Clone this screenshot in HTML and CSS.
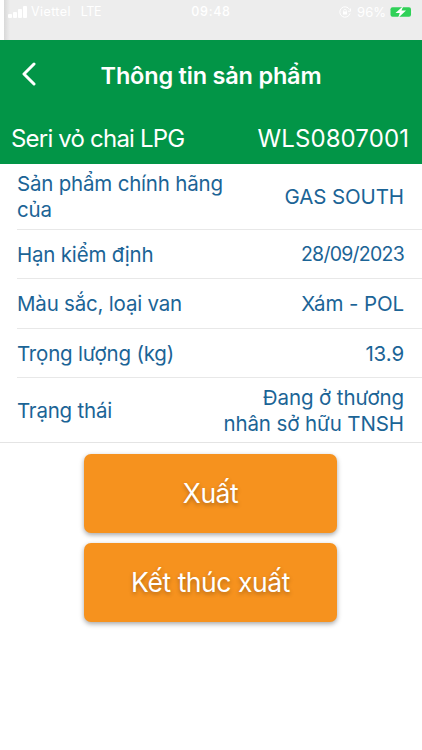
FILE: index.html
```html
<!DOCTYPE html>
<html lang="vi">
<head>
  <meta charset="UTF-8" />
  <meta name="viewport" content="width=device-width, initial-scale=1.0"/>
  <title>Thông tin sản phẩm</title>
  <link rel="stylesheet" href="styles.css">
</head>
<body>
  <div class="status-bar">
    <div class="status-left">
      <svg class="signal" width="19" height="12" viewBox="0 0 19 12" fill="#fff">
        <rect x="0" y="8" width="4" height="4" rx="1"/>
        <rect x="5" y="6" width="4" height="6" rx="1"/>
        <rect x="10" y="3" width="4" height="9" rx="1"/>
        <rect x="15" y="0" width="4" height="12" rx="1"/>
      </svg>
      <span class="carrier">Viettel</span>
      <span class="network">LTE</span>
    </div>
    <span class="clock">09:48</span>
    <div class="status-right">
      <svg class="lock" width="12" height="12" viewBox="0 0 12 12" fill="none" stroke="#fff">
        <path d="M10.6 3.6A5.2 5.2 0 1 0 11 7.4M11.6 2.5v2.7H9"/>
        <rect x="4" y="5.5" width="4" height="3" fill="#fff" stroke="none"/>
        <path d="M4.7 5.8V4.6a1.3 1.3 0 0 1 2.6 0v1.2" stroke-width=".8"/>
      </svg>
      <span class="percent">96%</span>
      <svg class="battery" width="24" height="12" viewBox="0 0 24 12">
        <rect x="0.5" y="1.3" width="20.5" height="9.4" rx="2" fill="#30d158"/>
        <path d="M13.3 0L5.5 7h4.3L8 12l8-7.4h-4.5z" fill="#fff"/>
        <path d="M22.5 4.2q1.4 1.8 0 3.6z" fill="#fff"/>
      </svg>
    </div>
  </div>

  <header class="header">
    <div class="title-bar">
      <svg class="back" width="14" height="24" viewBox="0 0 14 24" fill="none" stroke="#fff" stroke-width="3" stroke-linecap="round" stroke-linejoin="round">
        <path d="M12 2L2 12l10 10"/>
      </svg>
      <h1>Thông tin sản phẩm</h1>
    </div>
    <div class="serial">
      <span class="serial-label">Seri vỏ chai LPG</span>
      <span class="serial-value">WLS0807001</span>
    </div>
  </header>

  <div class="list">
    <div class="row tall">
      <span class="label">Sản phẩm chính hãng<br>của</span>
      <span class="value">GAS SOUTH</span>
    </div>
    <div class="row">
      <span class="label">Hạn kiểm định</span>
      <span class="value date">28/09/2023</span>
    </div>
    <div class="row">
      <span class="label">Màu sắc, loại van</span>
      <span class="value">Xám - POL</span>
    </div>
    <div class="row">
      <span class="label">Trọng lượng (kg)</span>
      <span class="value">13.9</span>
    </div>
    <div class="row tall last">
      <span class="label">Trạng thái</span>
      <span class="value">Đang ở thương<br>nhân sở hữu TNSH</span>
    </div>
  </div>

  <div class="actions">
    <button class="btn">Xuất</button>
    <button class="btn">Kết thúc xuất</button>
  </div>
</body>
</html>
```
FILE: styles.css
```css
* {
  box-sizing: border-box;
}
body {
  margin: 0;
  min-height: 100vh;
  font-family: Inter, sans-serif;
  background: #fff;
}
.status-bar {
  display: grid;
  grid-template-columns: 1fr auto 1fr;
  height: 40px;
  margin-left: 4px;
  padding: 6px 8px 0 4px;
  align-items: start;
  background: linear-gradient(to right, #d9d9d9, #ededed 6px);
  color: #fff;
  font-size: 12.5px;
  line-height: 12px;
}
.status-left, .status-right {
  display: flex;
  align-items: center;
}
.status-right {
  justify-content: flex-end;
}
.carrier {
  margin-left: 4px;
  letter-spacing: 0.4px;
}
.network {
  margin-left: 10px;
  letter-spacing: -0.4px;
}
.clock {
  font-weight: 500;
  letter-spacing: 0.7px;
}
.percent {
  margin: 0 4px 0 6px;
  font-size: 13px;
}
.header {
  height: 124px;
  background: #029547;
  color: #fff;
}
.title-bar {
  display: grid;
  grid-template-columns: 60px 1fr 60px;
  align-items: center;
  height: 72px;
}
.back {
  margin: -4px 0 0 22px;
}
h1 {
  margin: 0;
  font-size: 23.5px;
  font-weight: 600;
  line-height: 30px;
  text-align: center;
  white-space: nowrap;
  letter-spacing: -0.2px;
}
.serial {
  display: flex;
  justify-content: space-between;
  padding: 12px 13px 0 11px;
  font-size: 24px;
  line-height: 30px;
}
.serial-label {
  letter-spacing: -0.8px;
}
.serial-value {
  letter-spacing: 0.1px;
}
.list {
  border-bottom: 1px solid #e4e4e4;
  color: #1b6496;
  font-size: 20.5px;
  line-height: 25.5px;
}
.row {
  display: flex;
  justify-content: space-between;
  align-items: center;
  height: 49.5px;
  margin-left: 17px;
  padding: 1px 18px 0 0;
  border-bottom: 1px solid #e8e8e8;
}
.row.tall {
  height: 65.5px;
}
.row.last {
  height: 64px;
  border-bottom: 0;
}
.label {
  letter-spacing: -0.2px;
}
.value {
  text-align: right;
  letter-spacing: -0.1px;
}
.date {
  font-size: 19.5px;
  letter-spacing: -0.75px;
}
.actions {
  display: flex;
  flex-direction: column;
  align-items: center;
  gap: 10px;
  padding: 11px 1px 20px 0;
}
.btn {
  width: 253px;
  height: 79px;
  padding: 0 0 1px;
  border: none;
  border-radius: 7px;
  background: #f6921e;
  color: #fff;
  font-family: inherit;
  font-size: 26.5px;
  letter-spacing: -0.45px;
  text-shadow: 0 2px 4px rgba(0,0,0,0.3);
  box-shadow: 0 2px 5px rgba(0,0,0,0.35);
}
```
